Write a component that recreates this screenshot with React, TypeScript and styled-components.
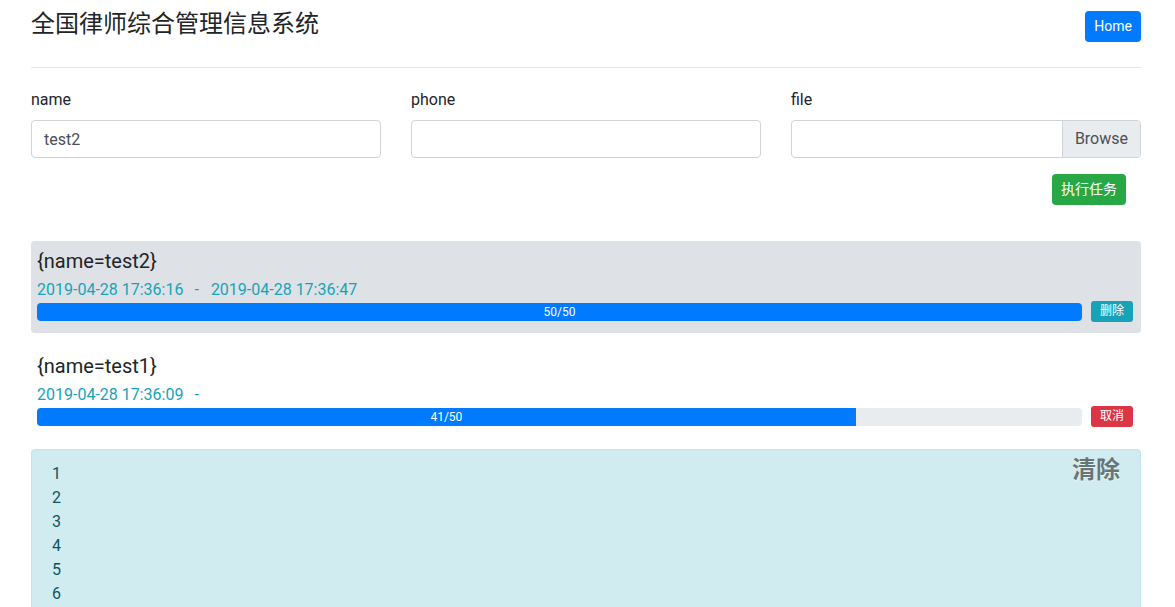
import React from "react";
import styled, { createGlobalStyle } from "styled-components";

const GlobalStyle = createGlobalStyle`
  html, body { margin: 0; padding: 0; overflow: hidden; background: #fff; }
  body {
    font-family: Roboto, "Noto Sans CJK SC", "Helvetica Neue", Arial, sans-serif;
    font-size: 16px;
    line-height: 1.5;
    color: #212529;
  }
  * { box-sizing: border-box; }
`;

const Container = styled.div`
  width: 1110px;
  margin-left: 31px;
  padding-top: 10px;
`;

const Header = styled.div`
  display: flex;
  justify-content: space-between;
  align-items: flex-start;
`;

const Title = styled.h3`
  margin: 0;
  font-size: 24px;
  font-weight: 400;
  line-height: 1.2;
  color: #212529;
`;

const Btn = styled.button<{ $variant: "primary" | "success" | "info" | "danger"; $tiny?: boolean }>`
  font-family: inherit;
  border: 1px solid transparent;
  border-radius: ${(p) => (p.$tiny ? "3px" : "4px")};
  color: #fff;
  cursor: pointer;
  font-size: ${(p) => (p.$tiny ? "12px" : "14px")};
  line-height: ${(p) => (p.$tiny ? "17px" : "21px")};
  padding: ${(p) => (p.$tiny ? "1px 8px" : "4px 8px")};
  background: ${(p) =>
    ({ primary: "#007bff", success: "#28a745", info: "#17a2b8", danger: "#dc3545" }[p.$variant])};
  white-space: nowrap;
  flex: none;
`;

const HomeBtn = styled(Btn)`
  margin-top: 1px;
`;

const Divider = styled.hr`
  margin: 25px 0 0;
  border: 0;
  border-top: 1px solid rgba(0, 0, 0, 0.1);
`;

const FormRow = styled.div`
  display: grid;
  grid-template-columns: repeat(3, 1fr);
  column-gap: 30px;
  margin-top: 20px;
`;

const Field = styled.div`
  display: flex;
  flex-direction: column;
`;

const Label = styled.label`
  display: block;
  margin-bottom: 8px;
  line-height: 24px;
`;

const Input = styled.input`
  display: block;
  width: 100%;
  height: 38px;
  padding: 6px 12px;
  font-family: inherit;
  font-size: 16px;
  line-height: 24px;
  color: #495057;
  background: #fff;
  border: 1px solid #ced4da;
  border-radius: 4px;
  outline: none;
`;

const FileBox = styled.div`
  display: flex;
  height: 38px;
  border: 1px solid #ced4da;
  border-radius: 4px;
  overflow: hidden;
`;

const FileName = styled.div`
  flex: 1;
`;

const Browse = styled.span`
  display: flex;
  align-items: center;
  padding: 0 12px;
  background: #e9ecef;
  border-left: 1px solid #ced4da;
  color: #495057;
  line-height: 24px;
`;

const ActionRow = styled.div`
  display: flex;
  justify-content: flex-end;
  padding-right: 15px;
  margin-top: 16px;
`;

const TaskList = styled.div`
  display: flex;
  flex-direction: column;
  gap: 13px;
  margin-top: 36px;
`;

const Task = styled.div<{ $active?: boolean }>`
  background: ${(p) => (p.$active ? "#dee2e6" : "transparent")};
  border-radius: 4px;
  padding: 8px 8px 11px 6px;
`;

const TaskName = styled.h5`
  margin: 0 0 6px;
  font-size: 20px;
  font-weight: 400;
  line-height: 24px;
`;

const Times = styled.div`
  color: #17a2b8;
  line-height: 22px;
  display: flex;
`;

const Dash = styled.span`
  margin: 0 12px 0 11px;
`;

const ProgressRow = styled.div`
  display: flex;
  align-items: center;
  gap: 9px;
`;

const Progress = styled.div`
  flex: 1;
  height: 18px;
  background: #e9ecef;
  border-radius: 4px;
  overflow: hidden;
  display: flex;
`;

const Bar = styled.div`
  background: #007bff;
  color: #fff;
  font-size: 12px;
  line-height: 18px;
  text-align: center;
  white-space: nowrap;
`;

const Alert = styled.div`
  position: relative;
  margin-top: 11px;
  padding: 12px 20px;
  background: #d1ecf1;
  border: 1px solid #bee5eb;
  border-radius: 4px;
  color: #0c5460;
`;

const LogLine = styled.div`
  line-height: 24px;
`;

const Close = styled.button`
  position: absolute;
  top: 0;
  right: 0;
  padding: 8px 20px;
  background: transparent;
  border: 0;
  font-family: inherit;
  font-size: 24px;
  font-weight: 700;
  line-height: 1;
  color: #000;
  text-shadow: 0 1px 0 #fff;
  opacity: 0.5;
  cursor: pointer;
`;

type TaskData = {
  name: string;
  start: string;
  end?: string;
  done: number;
  total: number;
  width: number;
  active?: boolean;
  action: { label: string; variant: "info" | "danger" };
};

const tasks: TaskData[] = [
  {
    name: "{name=test2}",
    start: "2019-04-28 17:36:16",
    end: "2019-04-28 17:36:47",
    done: 50,
    total: 50,
    width: 100,
    active: true,
    action: { label: "删除", variant: "info" },
  },
  {
    name: "{name=test1}",
    start: "2019-04-28 17:36:09",
    done: 41,
    total: 50,
    width: 78.35,
    action: { label: "取消", variant: "danger" },
  },
];

export default function App() {
  return (
    <>
      <GlobalStyle />
      <Container>
        <Header>
          <Title>全国律师综合管理信息系统</Title>
          <HomeBtn $variant="primary">Home</HomeBtn>
        </Header>
        <Divider />
        <FormRow>
          <Field>
            <Label>name</Label>
            <Input defaultValue="test2" />
          </Field>
          <Field>
            <Label>phone</Label>
            <Input defaultValue="" />
          </Field>
          <Field>
            <Label>file</Label>
            <FileBox>
              <FileName />
              <Browse>Browse</Browse>
            </FileBox>
          </Field>
        </FormRow>
        <ActionRow>
          <Btn $variant="success">执行任务</Btn>
        </ActionRow>
        <TaskList>
          {tasks.map((t) => (
            <Task key={t.name} $active={t.active}>
              <TaskName>{t.name}</TaskName>
              <Times>
                <span>{t.start}</span>
                <Dash>-</Dash>
                {t.end && <span>{t.end}</span>}
              </Times>
              <ProgressRow>
                <Progress>
                  <Bar style={{ width: `${t.width}%` }}>
                    {t.done}/{t.total}
                  </Bar>
                </Progress>
                <Btn $variant={t.action.variant} $tiny>
                  {t.action.label}
                </Btn>
              </ProgressRow>
            </Task>
          ))}
        </TaskList>
        <Alert>
          <Close>清除</Close>
          {[1, 2, 3, 4, 5, 6].map((n) => (
            <LogLine key={n}>{n}</LogLine>
          ))}
        </Alert>
      </Container>
    </>
  );
}
